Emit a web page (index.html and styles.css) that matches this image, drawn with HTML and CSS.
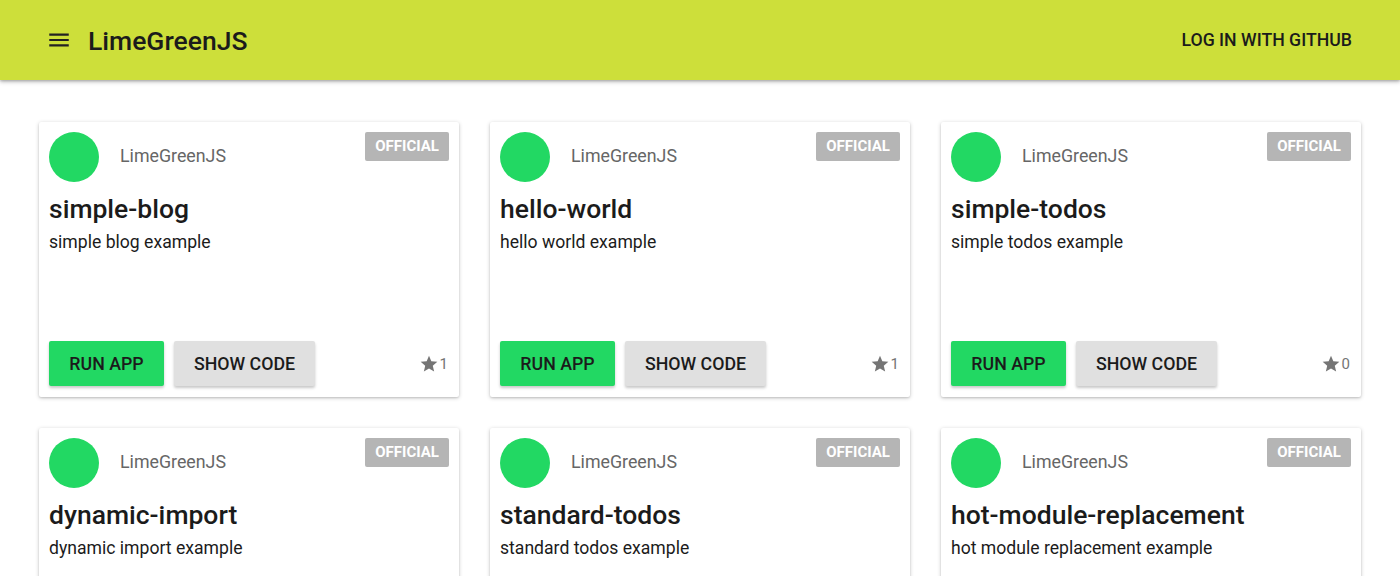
FILE: index.html
```html
<!DOCTYPE html>
<html>
<head>
<meta charset="utf-8">
<link rel="stylesheet" href="styles.css">
</head>
<body>
<header class="appbar">
  <div class="bar-left">
    <svg class="menu" width="24" height="24" viewBox="0 0 24 24"><path d="M3 18h18v-2H3v2zm0-5h18v-2H3v2zm0-7v2h18V6H3z" fill="#222"/></svg>
    <span class="brand">LimeGreenJS</span>
  </div>
  <span class="login">LOG IN WITH GITHUB</span>
</header>
<main class="grid">
  <div class="card">
    <div class="card-top"><div class="avatar"></div><span class="author">LimeGreenJS</span><span class="badge">OFFICIAL</span></div>
    <h2 class="title">simple-blog</h2>
    <p class="desc">simple blog example</p>
    <div class="actions"><button class="btn run">RUN APP</button><button class="btn code">SHOW CODE</button><span class="stars"><svg width="20" height="20" viewBox="0 0 24 24"><path d="M12 17.27L18.18 21l-1.64-7.03L22 9.24l-7.19-.61L12 2 9.19 8.63 2 9.24l5.46 4.73L5.82 21z" fill="#757575"/></svg>1</span></div>
  </div>
  <div class="card">
    <div class="card-top"><div class="avatar"></div><span class="author">LimeGreenJS</span><span class="badge">OFFICIAL</span></div>
    <h2 class="title">hello-world</h2>
    <p class="desc">hello world example</p>
    <div class="actions"><button class="btn run">RUN APP</button><button class="btn code">SHOW CODE</button><span class="stars"><svg width="20" height="20" viewBox="0 0 24 24"><path d="M12 17.27L18.18 21l-1.64-7.03L22 9.24l-7.19-.61L12 2 9.19 8.63 2 9.24l5.46 4.73L5.82 21z" fill="#757575"/></svg>1</span></div>
  </div>
  <div class="card">
    <div class="card-top"><div class="avatar"></div><span class="author">LimeGreenJS</span><span class="badge">OFFICIAL</span></div>
    <h2 class="title">simple-todos</h2>
    <p class="desc">simple todos example</p>
    <div class="actions"><button class="btn run">RUN APP</button><button class="btn code">SHOW CODE</button><span class="stars"><svg width="20" height="20" viewBox="0 0 24 24"><path d="M12 17.27L18.18 21l-1.64-7.03L22 9.24l-7.19-.61L12 2 9.19 8.63 2 9.24l5.46 4.73L5.82 21z" fill="#757575"/></svg>0</span></div>
  </div>
  <div class="card">
    <div class="card-top"><div class="avatar"></div><span class="author">LimeGreenJS</span><span class="badge">OFFICIAL</span></div>
    <h2 class="title">dynamic-import</h2>
    <p class="desc">dynamic import example</p>
    <div class="actions"><button class="btn run">RUN APP</button><button class="btn code">SHOW CODE</button><span class="stars"><svg width="20" height="20" viewBox="0 0 24 24"><path d="M12 17.27L18.18 21l-1.64-7.03L22 9.24l-7.19-.61L12 2 9.19 8.63 2 9.24l5.46 4.73L5.82 21z" fill="#757575"/></svg>0</span></div>
  </div>
  <div class="card">
    <div class="card-top"><div class="avatar"></div><span class="author">LimeGreenJS</span><span class="badge">OFFICIAL</span></div>
    <h2 class="title">standard-todos</h2>
    <p class="desc">standard todos example</p>
    <div class="actions"><button class="btn run">RUN APP</button><button class="btn code">SHOW CODE</button><span class="stars"><svg width="20" height="20" viewBox="0 0 24 24"><path d="M12 17.27L18.18 21l-1.64-7.03L22 9.24l-7.19-.61L12 2 9.19 8.63 2 9.24l5.46 4.73L5.82 21z" fill="#757575"/></svg>0</span></div>
  </div>
  <div class="card">
    <div class="card-top"><div class="avatar"></div><span class="author">LimeGreenJS</span><span class="badge">OFFICIAL</span></div>
    <h2 class="title">hot-module-replacement</h2>
    <p class="desc">hot module replacement example</p>
    <div class="actions"><button class="btn run">RUN APP</button><button class="btn code">SHOW CODE</button><span class="stars"><svg width="20" height="20" viewBox="0 0 24 24"><path d="M12 17.27L18.18 21l-1.64-7.03L22 9.24l-7.19-.61L12 2 9.19 8.63 2 9.24l5.46 4.73L5.82 21z" fill="#757575"/></svg>0</span></div>
  </div>
</main>
</body>
</html>
```
FILE: styles.css
```css
* { box-sizing: border-box; }
html, body { margin: 0; padding: 0; }
body {
  font-family: Roboto, "Liberation Sans", Arial, sans-serif;
  background: #fff;
  color: #212121;
  overflow: hidden;
}
.appbar {
  height: 80px;
  background: #cddf3a;
  display: flex;
  align-items: center;
  justify-content: space-between;
  padding: 0 48px 0 46px;
  box-shadow: 0 2px 4px rgba(0,0,0,0.25), 0 1px 2px rgba(0,0,0,0.15);
  position: relative;
  z-index: 1;
}
.bar-left { display: flex; align-items: center; }
.menu { width: 26px; height: 26px; margin-right: 16px; }
.brand { font-size: 26.5px; font-weight: 500; color: #1b1b1b; }
.login { font-size: 17.7px; font-weight: 500; color: #1b1b1b; }
.grid {
  display: grid;
  grid-template-columns: repeat(3, 420px);
  column-gap: 31px;
  row-gap: 31px;
  padding: 42px 39px 0 39px;
}
.card {
  height: 275px;
  background: #fff;
  border-radius: 2px;
  box-shadow: 0 1px 4px rgba(0,0,0,0.2), 0 1px 2px rgba(0,0,0,0.12);
  padding: 10px 10px 11px 10px;
  display: flex;
  flex-direction: column;
}
.card-top { display: flex; align-items: flex-start; height: 50px; }
.avatar { width: 50px; height: 50px; border-radius: 50%; background: #22d863; flex: none; }
.author { font-size: 17.8px; color: #666; margin: 13px 0 0 21px; flex: 1; }
.badge {
  background: #b5b5b5;
  color: #fff;
  font-size: 15px;
  font-weight: 700;
  padding: 0 10px;
  height: 29px;
  line-height: 29px;
  border-radius: 2px;
}
.title { font-size: 26.5px; font-weight: 500; margin: 11px 0 0 0; line-height: 32px; color: #1b1b1b; }
.desc { font-size: 17.6px; margin: 6px 0 0 0; line-height: 23px; color: #1b1b1b; }
.actions { margin-top: auto; display: flex; align-items: center; }
.btn {
  font-family: inherit;
  font-size: 17.8px;
  font-weight: 500;
  height: 45px;
  border: none;
  border-radius: 2px;
  color: #1b1b1b;
  padding: 0;
  margin-right: 10px;
  box-shadow: 0 2px 3px rgba(0,0,0,0.22);
}
.run { background: #22d863; width: 115px; }
.code { background: #e0e0e0; width: 141px; }
.stars { margin-left: auto; display: flex; align-items: center; font-size: 15px; color: #757575; margin-right: 1px; }
.stars svg { margin-right: 1px; }
```
